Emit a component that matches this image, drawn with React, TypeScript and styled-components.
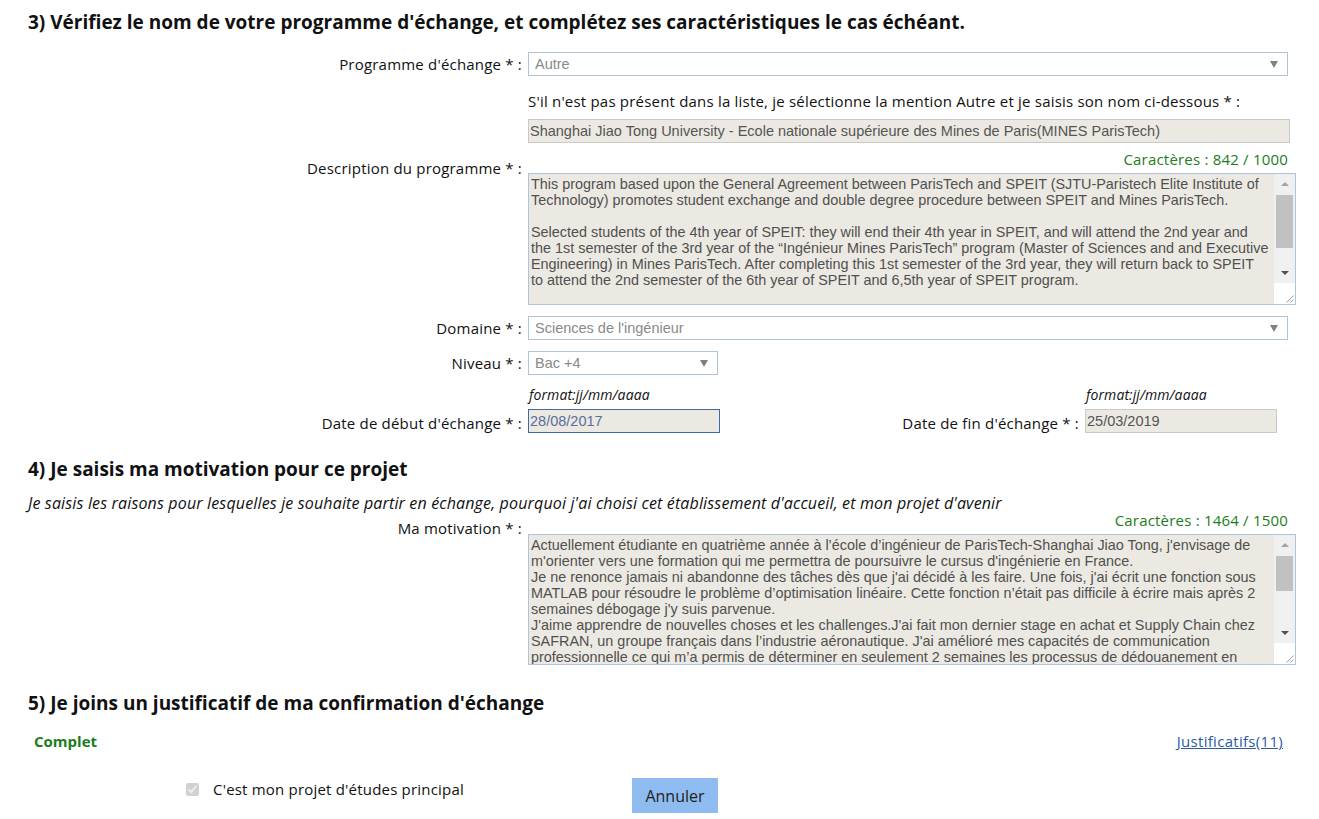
import styled, { createGlobalStyle } from "styled-components";

const GlobalStyle = createGlobalStyle`
  html, body {
    margin: 0;
    padding: 0;
    background: #ffffff;
  }
  body {
    font-family: "Open Sans", "Noto Sans", sans-serif;
    color: #111;
  }
`;

const descriptionText =
  "This program based upon the General Agreement between ParisTech and SPEIT (SJTU-Paristech Elite Institute of Technology) promotes student exchange and double degree procedure between SPEIT and Mines ParisTech.\n\n" +
  "Selected students of the 4th year of SPEIT: they will end their 4th year in SPEIT, and will attend the 2nd year and the 1st semester of the 3rd year of the \u201cIngénieur Mines ParisTech\u201d program (Master of Sciences and and Executive Engineering) in Mines ParisTech. After completing this 1st semester of the 3rd year, they will return back to SPEIT to attend the 2nd semester of the 6th year of SPEIT and 6,5th year of SPEIT program.\n\n" +
  "Students will obtain the diploma of SPEIT and the diploma of Mines ParisTech.\n\n";

const motivationText =
  "Actuellement étudiante en quatrième année à l\u2019école d\u2019ingénieur de ParisTech-Shanghai Jiao Tong, j'envisage de m'orienter vers une formation qui me permettra de poursuivre le cursus d'ingénierie en France.\n" +
  "Je ne renonce jamais ni abandonne des tâches dès que j'ai décidé à les faire. Une fois, j'ai écrit une fonction sous MATLAB pour résoudre le problème d\u2019optimisation linéaire. Cette fonction n\u2019était pas difficile à écrire mais après 2 semaines débogage j'y suis parvenue.\n" +
  "J'aime apprendre de nouvelles choses et les challenges.J'ai fait mon dernier stage en achat et Supply Chain chez SAFRAN, un groupe français dans l\u2019industrie aéronautique. J'ai amélioré mes capacités de communication professionnelle ce qui m\u2019a permis de déterminer en seulement 2 semaines les processus de dédouanement en Chine.\n\n";

type ScrollTextProps = {
  value: string;
  height: number;
  thumb: number;
};

function ScrollText({ value, height, thumb }: ScrollTextProps) {
  return (
    <TextBox $height={height}>
      <TextArea readOnly value={value} />
      <ScrollColumn>
        <Track>
          <ArrowButton>
            <UpArrow />
          </ArrowButton>
          <ThumbLane>
            <Thumb style={{ height: thumb }} />
          </ThumbLane>
          <ArrowButton>
            <DownArrow />
          </ArrowButton>
        </Track>
        <Corner>
          <svg width="21" height="21" viewBox="0 0 21 21">
            <line x1="19.5" y1="12.5" x2="12.5" y2="19.5" stroke="#9a9a9a" strokeWidth="1" />
            <line x1="19.5" y1="16.5" x2="16.5" y2="19.5" stroke="#9a9a9a" strokeWidth="1" />
          </svg>
        </Corner>
      </ScrollColumn>
    </TextBox>
  );
}

function App() {
  return (
    <Page>
      <GlobalStyle />

      <SectionTitle>3) Vérifiez le nom de votre programme d'échange, et complétez ses caractéristiques le cas échéant.</SectionTitle>

      <FormRow $top={18}>
        <Label>Programme d'échange * :</Label>
        <SelectWrap $width={760}>
          <Select disabled value="autre" onChange={() => {}}>
            <option value="autre">Autre</option>
          </Select>
          <Caret />
        </SelectWrap>
      </FormRow>

      <FormRow $top={15}>
        <span />
        <Helper>S'il n'est pas présent dans la liste, je sélectionne la mention Autre et je saisis son nom ci-dessous * :</Helper>
      </FormRow>

      <FormRow $top={8}>
        <span />
        <GreyInput
          $width={762}
          readOnly
          value="Shanghai Jiao Tong University - Ecole nationale supérieure des Mines de Paris(MINES ParisTech)"
        />
      </FormRow>

      <FormRow $top={6} $align="start">
        <Label $pad={9}>Description du programme * :</Label>
        <FieldStack>
          <Counter>Caractères : 842 / 1000</Counter>
          <ScrollText value={descriptionText} height={132} thumb={53} />
        </FieldStack>
      </FormRow>

      <FormRow $top={11}>
        <Label>Domaine * :</Label>
        <SelectWrap $width={760}>
          <Select disabled value="si" onChange={() => {}}>
            <option value="si">Sciences de l'ingénieur</option>
          </Select>
          <Caret />
        </SelectWrap>
      </FormRow>

      <FormRow $top={11}>
        <Label>Niveau * :</Label>
        <SelectWrap $width={190}>
          <Select disabled value="bac4" onChange={() => {}}>
            <option value="bac4">Bac +4</option>
          </Select>
          <Caret />
        </SelectWrap>
      </FormRow>

      <DateRow>
        <Label>Date de début d'échange * :</Label>
        <DateField>
          <FormatHint>format:jj/mm/aaaa</FormatHint>
          <DateInput readOnly value="28/08/2017" $focused />
        </DateField>
        <Label>Date de fin d'échange * :</Label>
        <DateField>
          <FormatHint>format:jj/mm/aaaa</FormatHint>
          <DateInput readOnly value="25/03/2019" />
        </DateField>
      </DateRow>

      <SectionTitle $top={24}>4) Je saisis ma motivation pour ce projet</SectionTitle>
      <Intro>Je saisis les raisons pour lesquelles je souhaite partir en échange, pourquoi j'ai choisi cet établissement d'accueil, et mon projet d'avenir</Intro>

      <FormRow $top={-3} $align="start">
        <Label $pad={8}>Ma motivation * :</Label>
        <FieldStack>
          <Counter>Caractères : 1464 / 1500</Counter>
          <ScrollText value={motivationText} height={131} thumb={35} />
        </FieldStack>
      </FormRow>

      <SectionTitle $top={26}>5) Je joins un justificatif de ma confirmation d'échange</SectionTitle>

      <StatusRow>
        <Complete>Complet</Complete>
        <DocLink href="#">Justificatifs(11)</DocLink>
      </StatusRow>

      <FooterRow>
        <CheckLabel>
          <input type="checkbox" checked disabled readOnly />
          <span>C'est mon projet d'études principal</span>
        </CheckLabel>
        <CancelButton type="button">Annuler</CancelButton>
      </FooterRow>
    </Page>
  );
}

export default App;

const Page = styled.div`
  width: 1319px;
  padding: 10px 0 20px 28px;
  box-sizing: border-box;
`;

const SectionTitle = styled.h2<{ $top?: number }>`
  margin: ${(p) => p.$top ?? 0}px 0 0;
  font-size: 19px;
  line-height: 24px;
  font-weight: 700;
  color: #111;
`;

const FormRow = styled.div<{ $top: number; $align?: string }>`
  display: grid;
  grid-template-columns: 494px 768px;
  column-gap: 6px;
  align-items: ${(p) => p.$align ?? "center"};
  margin-top: ${(p) => p.$top}px;
`;

const Label = styled.label<{ $pad?: number }>`
  text-align: right;
  font-size: 15px;
  letter-spacing: 0.2px;
  line-height: 20px;
  color: #111;
  padding-top: ${(p) => p.$pad ?? 0}px;
  white-space: nowrap;
`;

const Helper = styled.div`
  font-size: 15px;
  letter-spacing: 0.2px;
  line-height: 20px;
  color: #111;
`;

const SelectWrap = styled.div<{ $width: number }>`
  position: relative;
  width: ${(p) => p.$width}px;
`;

const Select = styled.select`
  appearance: none;
  width: 100%;
  height: 24px;
  box-sizing: border-box;
  border: 1px solid #aec3dc;
  background: #ffffff;
  padding: 0 24px 0 6px;
  font-family: "Liberation Sans", Arial, sans-serif;
  font-size: 14.5px;
  color: #8a8a8a;
  opacity: 1;
`;

const Caret = styled.span`
  position: absolute;
  right: 10px;
  top: 9px;
  width: 0;
  height: 0;
  border-left: 4px solid transparent;
  border-right: 4px solid transparent;
  border-top: 7px solid #808080;
  pointer-events: none;
`;

const GreyInput = styled.input<{ $width: number }>`
  width: ${(p) => p.$width}px;
  height: 24px;
  box-sizing: border-box;
  border: 1px solid #c9c9c9;
  background: #ebe9e2;
  padding: 0 1px;
  font-family: "Liberation Sans", Arial, sans-serif;
  font-size: 14.5px;
  color: #555;
  outline: none;
`;

const FieldStack = styled.div`
  display: flex;
  flex-direction: column;
  gap: 4px;
`;

const Counter = styled.div`
  text-align: right;
  padding-right: 8px;
  font-size: 15px;
  letter-spacing: 0.2px;
  line-height: 20px;
  color: #1b7d1b;
`;

const TextBox = styled.div<{ $height: number }>`
  display: flex;
  width: 768px;
  height: ${(p) => p.$height}px;
  box-sizing: border-box;
  border: 1px solid #aec3dc;
  background: #ebe9e2;
`;

const TextArea = styled.textarea`
  flex: 1;
  min-width: 0;
  border: none;
  background: transparent;
  padding: 2px 4.5px 2px 2px;
  margin: 0;
  font-family: "Liberation Sans", Arial, sans-serif;
  font-size: 14.4px;
  line-height: 16px;
  color: #505050;
  overflow: hidden;
  resize: none;
  outline: none;
`;

const ScrollColumn = styled.div`
  width: 21px;
  display: flex;
  flex-direction: column;
`;

const Track = styled.div`
  flex: 1;
  display: flex;
  flex-direction: column;
  background: #f0f0f0;
`;

const ArrowButton = styled.div`
  height: 20px;
  display: flex;
  align-items: center;
  justify-content: center;
`;

const UpArrow = styled.span`
  width: 0;
  height: 0;
  border-left: 4px solid transparent;
  border-right: 4px solid transparent;
  border-bottom: 4px solid #a3a3a3;
`;

const DownArrow = styled.span`
  width: 0;
  height: 0;
  border-left: 4px solid transparent;
  border-right: 4px solid transparent;
  border-top: 4px solid #505050;
`;

const ThumbLane = styled.div`
  flex: 1;
  padding: 1px 2px 0;
`;

const Thumb = styled.div`
  background: #c1c1c1;
`;

const Corner = styled.div`
  height: 21px;
  background: #ffffff;
  display: flex;
`;

const DateRow = styled.div`
  display: grid;
  grid-template-columns: 494px 192px 1fr 192px;
  column-gap: 6px;
  align-items: end;
  width: 1249px;
  margin-top: 10px;
`;

const DateField = styled.div`
  display: flex;
  flex-direction: column;
  gap: 4px;
`;

const FormatHint = styled.div`
  font-size: 14px;
  letter-spacing: 0.1px;
  line-height: 20px;
  font-style: italic;
  color: #111;
  padding-left: 1px;
`;

const DateInput = styled.input<{ $focused?: boolean }>`
  width: 192px;
  height: 24px;
  box-sizing: border-box;
  border: 1px solid ${(p) => (p.$focused ? "#3e6aa6" : "#c9c9c9")};
  background: #ebe9e2;
  padding: 0 1px;
  font-family: "Liberation Sans", Arial, sans-serif;
  font-size: 14.5px;
  color: ${(p) => (p.$focused ? "#5a6e9e" : "#555")};
  outline: none;
`;

const Intro = styled.p`
  margin: 12px 0 0;
  font-size: 16px;
  letter-spacing: 0.15px;
  line-height: 20px;
  font-style: italic;
  color: #111;
`;

const StatusRow = styled.div`
  display: flex;
  justify-content: space-between;
  align-items: center;
  width: 1255px;
  margin-top: 16px;
  padding-left: 6px;
  box-sizing: border-box;
`;

const Complete = styled.span`
  font-size: 15px;
  line-height: 20px;
  font-weight: 700;
  color: #1b7d1b;
`;

const DocLink = styled.a`
  font-size: 15px;
  letter-spacing: 0.3px;
  line-height: 20px;
  color: #2c5d9e;
  text-decoration: underline;
`;

const FooterRow = styled.div`
  display: flex;
  align-items: flex-start;
  margin-top: 27px;
  padding-left: 158px;
`;

const CheckLabel = styled.label`
  display: flex;
  align-items: center;
  gap: 14px;
  width: 446px;
  margin-top: 1px;
  font-size: 15px;
  letter-spacing: 0.2px;
  line-height: 20px;
  color: #111;

  input {
    margin: 0;
    width: 13px;
    height: 13px;
  }
`;

const CancelButton = styled.button`
  width: 86px;
  height: 35px;
  border: none;
  background: #8fbcf0;
  font-family: "Open Sans", "Noto Sans", sans-serif;
  font-size: 16px;
  color: #222;
  cursor: pointer;
`;
